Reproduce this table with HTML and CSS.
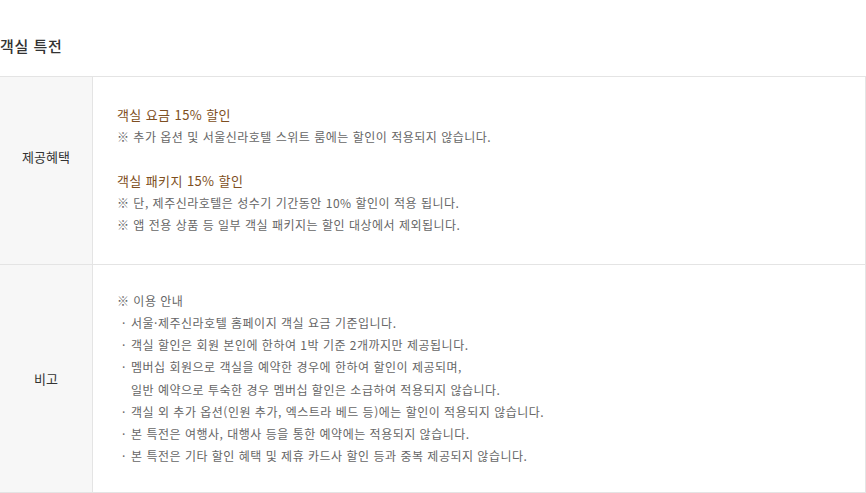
FILE: index.html
```html
<!DOCTYPE html>
<html lang="ko">
<head>
  <meta charset="UTF-8" />
  <meta name="viewport" content="width=device-width, initial-scale=1" />
  <title>객실 특전</title>
  <link rel="stylesheet" href="styles.css">
</head>
<body>

  <!-- Section title -->
  <h2 class="section-title">객실 특전</h2>

  <!-- Benefit table -->
  <div class="benefit-table">
    <div class="row row-benefit">
      <div class="label label-offset">제공혜택</div>
      <div class="content">
        <div class="benefit">
          <p class="benefit-title">객실 요금 15% 할인</p>
          <p class="note">※ 추가 옵션 및 서울신라호텔 스위트 룸에는 할인이 적용되지 않습니다.</p>
        </div>
        <div class="benefit">
          <p class="benefit-title">객실 패키지 15% 할인</p>
          <p class="note">※ 단, 제주신라호텔은 성수기 기간동안 10% 할인이 적용 됩니다.</p>
          <p class="note">※ 앱 전용 상품 등 일부 객실 패키지는 할인 대상에서 제외됩니다.</p>
        </div>
      </div>
    </div>
    <div class="row row-remark">
      <div class="label">비고</div>
      <div class="content">
        <p class="note">※ 이용 안내</p>
        <ul class="guide-list">
          <li>서울·제주신라호텔 홈페이지 객실 요금 기준입니다.</li>
          <li>객실 할인은 회원 본인에 한하여 1박 기준 2개까지만 제공됩니다.</li>
          <li>멤버십 회원으로 객실을 예약한 경우에 한하여 할인이 제공되며,<br>일반 예약으로 투숙한 경우 멤버십 할인은 소급하여 적용되지 않습니다.</li>
          <li>객실 외 추가 옵션(인원 추가, 엑스트라 베드 등)에는 할인이 적용되지 않습니다.</li>
          <li>본 특전은 여행사, 대행사 등을 통한 예약에는 적용되지 않습니다.</li>
          <li>본 특전은 기타 할인 혜택 및 제휴 카드사 할인 등과 중복 제공되지 않습니다.</li>
        </ul>
      </div>
    </div>
  </div>

</body>
</html>
```

FILE: styles.css
```css
body, html {
  margin: 0; padding: 0;
  font-family: "Noto Sans CJK KR", "Noto Sans", sans-serif;
  background: #fff;
  color: #666;
}
body {
  width: 866px;
}
p, ul {
  margin: 0; padding: 0;
}

/* Title */
.section-title {
  margin: 0;
  padding: 36px 0 20px 0;
  font-size: 15px;
  line-height: 20px;
  font-weight: 500;
  letter-spacing: 0.6px;
  color: #333;
}

/* Table */
.benefit-table {
  border-top: 1px solid #e4e4e4;
  border-right: 1px solid #e4e4e4;
}
.row {
  display: grid;
  grid-template-columns: 93px 1fr;
  border-bottom: 1px solid #e4e4e4;
}
.label {
  display: flex;
  align-items: center;
  justify-content: center;
  background: #f7f7f7;
  border-right: 1px solid #e4e4e4;
  font-size: 13px;
  color: #333;
}
.label-offset {
  padding-bottom: 28px;
}
.content {
  padding: 0 24px;
  font-size: 12px;
  line-height: 22px;
  letter-spacing: 0.5px;
}
.row-benefit .content {
  padding-top: 27px;
  padding-bottom: 28px;
}
.row-remark .content {
  padding-top: 25px;
  padding-bottom: 25px;
}

.benefit + .benefit {
  margin-top: 22px;
}
.benefit-title {
  font-size: 13px;
  letter-spacing: 0.4px;
  color: #7e4f22;
}
.note {
  color: #666;
}

.guide-list {
  list-style: none;
}
.guide-list li {
  padding-left: 14px;
  text-indent: -9px;
  line-height: 22.2px;
}
.guide-list li::before {
  content: "·";
  display: inline-block;
  width: 9px;
  text-indent: 0;
}
```
